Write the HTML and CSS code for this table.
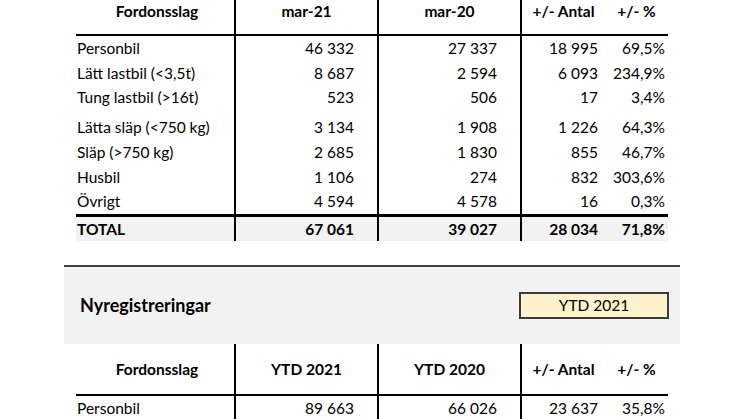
FILE: index.html
```html
<!DOCTYPE html>
<html lang="sv">
<head>
<meta charset="utf-8">
<title>Nyregistreringar</title>
<link rel="stylesheet" href="styles.css">
</head>
<body>
<div class="page">
  <table class="stats first">
    <colgroup>
      <col class="c1"><col class="c2"><col class="c3"><col class="c4"><col class="c5">
    </colgroup>
    <thead>
      <tr class="head top">
        <th class="name">Fordonsslag</th>
        <th class="v">mar-21</th>
        <th class="v">mar-20</th>
        <th class="v">+/- Antal</th>
        <th>+/- %</th>
      </tr>
    </thead>
    <tbody>
      <tr><td class="name">Personbil</td><td class="num v">46 332</td><td class="num v">27 337</td><td class="num4 v">18 995</td><td class="num5">69,5%</td></tr>
      <tr><td class="name">Lätt lastbil (&lt;3,5t)</td><td class="num v">8 687</td><td class="num v">2 594</td><td class="num4 v">6 093</td><td class="num5">234,9%</td></tr>
      <tr><td class="name">Tung lastbil (&gt;16t)</td><td class="num v">523</td><td class="num v">506</td><td class="num4 v">17</td><td class="num5">3,4%</td></tr>
      <tr class="tall"><td class="name">Lätta släp (&lt;750 kg)</td><td class="num v">3 134</td><td class="num v">1 908</td><td class="num4 v">1 226</td><td class="num5">64,3%</td></tr>
      <tr><td class="name">Släp (&gt;750 kg)</td><td class="num v">2 685</td><td class="num v">1 830</td><td class="num4 v">855</td><td class="num5">46,7%</td></tr>
      <tr><td class="name">Husbil</td><td class="num v">1 106</td><td class="num v">274</td><td class="num4 v">832</td><td class="num5">303,6%</td></tr>
      <tr><td class="name">Övrigt</td><td class="num v">4 594</td><td class="num v">4 578</td><td class="num4 v">16</td><td class="num5">0,3%</td></tr>
      <tr class="total"><td class="name">TOTAL</td><td class="num v">67 061</td><td class="num v">39 027</td><td class="num4 v">28 034</td><td class="num5">71,8%</td></tr>
    </tbody>
  </table>

  <div class="banner">
    <span class="banner-title">Nyregistreringar</span>
    <span class="period">YTD 2021</span>
  </div>

  <table class="stats second">
    <colgroup>
      <col class="c1"><col class="c2"><col class="c3"><col class="c4"><col class="c5">
    </colgroup>
    <thead>
      <tr class="head mid">
        <th class="name">Fordonsslag</th>
        <th class="v">YTD 2021</th>
        <th class="v">YTD 2020</th>
        <th class="v">+/- Antal</th>
        <th>+/- %</th>
      </tr>
    </thead>
    <tbody>
      <tr><td class="name">Personbil</td><td class="num v">89 663</td><td class="num v">66 026</td><td class="num4 v">23 637</td><td class="num5">35,8%</td></tr>
    </tbody>
  </table>
</div>
</body>
</html>
```

FILE: styles.css
```css
html, body {
  margin: 0;
  padding: 0;
  background: #ffffff;
}

body {
  font-family: Lato, "Open Sans", "Liberation Sans", sans-serif;
  font-size: 15.5px;
  color: #000000;
  width: 746px;
  height: 419px;
  overflow: hidden;
}

.page {
  display: flex;
  flex-direction: column;
}

.stats {
  margin-left: 76px;
  width: 592px;
  table-layout: fixed;
  border-collapse: separate;
  border-spacing: 0;
}

.c1 { width: 158px; }
.c2 { width: 143px; }
.c3 { width: 143px; }
.c4 { width: 85px; }
.c5 { width: 63px; }

.stats th,
.stats td {
  box-sizing: border-box;
  padding: 0;
  white-space: nowrap;
  line-height: 18px;
}

.stats th {
  font-weight: 700;
  text-align: center;
  border-bottom: 2px solid #000000;
}

.stats .v {
  border-left: 2px solid #000000;
}

.head.top th {
  height: 36px;
  vertical-align: top;
  padding-top: 2px;
}

.head.mid th {
  height: 52px;
  vertical-align: middle;
}

.stats th.name {
  padding-left: 4px;
  text-align: center;
}

.stats td {
  height: 24.5px;
  vertical-align: middle;
}

.stats td.name {
  text-align: left;
  padding-left: 1px;
}

.stats td.num {
  text-align: right;
  padding-right: 23px;
}

.stats td.num4 {
  text-align: right;
  padding-right: 7px;
}

.stats td.num5 {
  text-align: right;
  padding-right: 3px;
}

.stats tr.tall td {
  height: 30.5px;
  vertical-align: bottom;
  padding-bottom: 4px;
}

.stats tr.total td {
  height: 27px;
  font-weight: 700;
  background: #f2f2f2;
  border-top: 3px solid #000000;
}

.banner {
  margin-top: 24px;
  margin-left: 64px;
  width: 616px;
  height: 79px;
  box-sizing: border-box;
  border-top: 2px solid #404040;
  background: #f2f2f2;
  display: flex;
  align-items: center;
  justify-content: space-between;
  padding-left: 16px;
  padding-right: 11px;
}

.banner-title {
  font-weight: 700;
  font-size: 18px;
}

.period {
  width: 150px;
  height: 27px;
  box-sizing: border-box;
  border: 2px solid #3a3a3a;
  background: #fff2cc;
  display: flex;
  align-items: center;
  justify-content: center;
}
```
